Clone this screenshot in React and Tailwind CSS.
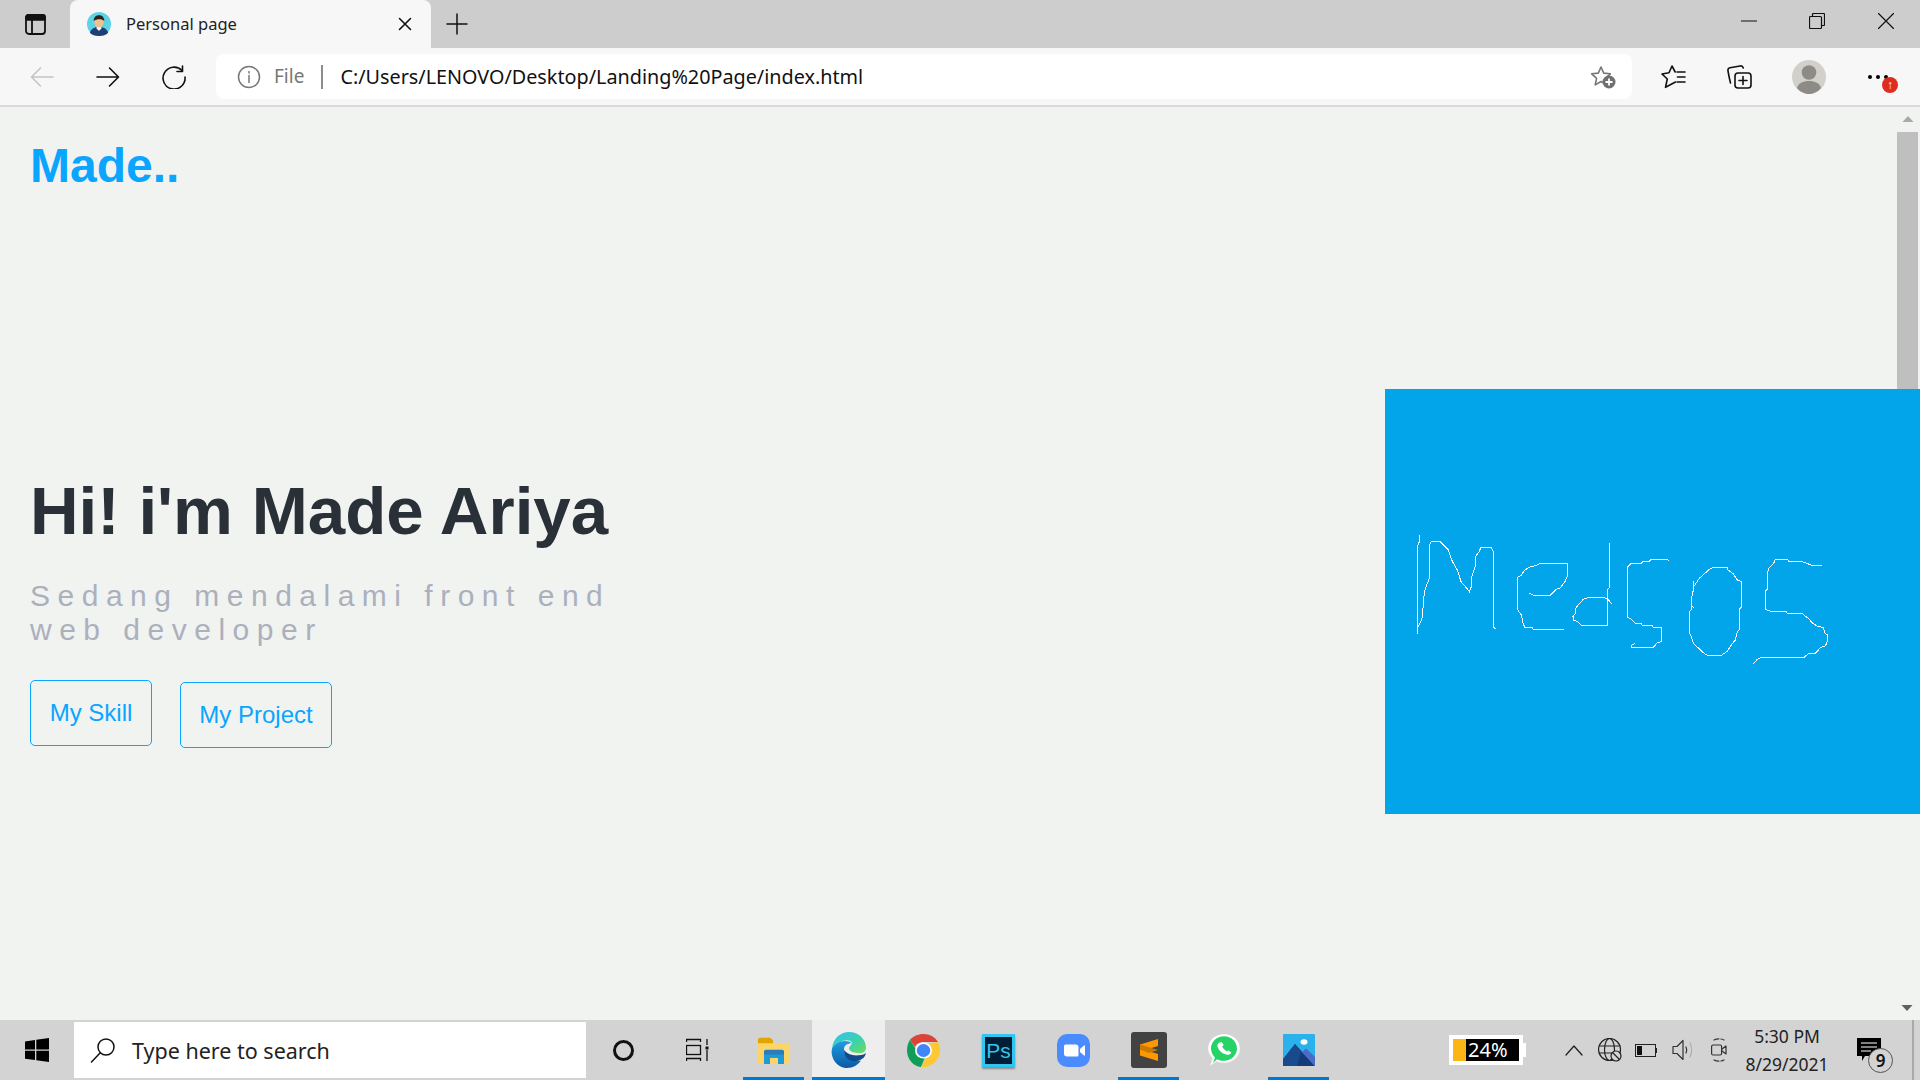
import React from "react";

const ui = { fontFamily: '"Noto Sans", "Open Sans", sans-serif' };
const page = { fontFamily: '"Liberation Sans", Arial, sans-serif' };

// --- browser chrome icons ---
const Line = ({ children, w = 24, h = 24, vb, sw = 1.6, color = "currentColor", className = "" }) => (
  <svg width={w} height={h} viewBox={vb || `0 0 ${w} ${h}`} fill="none" stroke={color} strokeWidth={sw} strokeLinecap="round" strokeLinejoin="round" className={className}>
    {children}
  </svg>
);

const Favicon = () => (
  <svg width="24" height="24" viewBox="0 0 25 29" preserveAspectRatio="none">
    <ellipse cx="12.5" cy="14.5" rx="12.5" ry="14.5" fill="#5dd3e6" />
    <path d="M3 25c1-5 5-7 9.500-7S21 20 22 25c-2 2.500-5.500 4-9.500 4S5 27.500 3 25z" fill="#1f3f77" />
    <path d="M10 17h5v3l-2.500 3-2.500-3z" fill="#f4f4f4" />
    <ellipse cx="12.500" cy="12" rx="5" ry="6.500" fill="#f0c08e" />
    <path d="M7 11c0-5 2.500-7 5.500-7s5.500 2 5.500 7c-2-3-8-3-11 0z" fill="#2b2420" />
  </svg>
);

const StarPath = "M12 3l2.700 6.100 6.600.7-4.900 4.500 1.400 6.600L12 17.500l-5.800 3.400 1.400-6.600-4.900-4.500 6.600-.7z";

const StarAdd = () => (
  <div className="relative w-[27px] h-[25px]">
    <Line color="#777"><path d={StarPath} /></Line>
    <svg width="14" height="14" viewBox="0 0 14 14" className="absolute right-0 bottom-0">
      <circle cx="7" cy="7" r="6.500" fill="#707070" />
      <path d="M7 3.500v7M3.500 7h7" stroke="#fff" strokeWidth="1.800" />
    </svg>
  </div>
);

const Favorites = () => (
  <Line w={25} h={24} color="#111">
    <path d="M14.500 17L4.500 22.300 6.300 14 1 9 8 7.800 11 1 14.200 7" />
    <path d="M16 7h8M16.500 12h7.500M16 17h8" />
  </Line>
);

const Collections = () => (
  <Line w={25} h={24} color="#111">
    <path d="M3.500 18C2.500 14 1.500 9 1 6c-.3-2 .6-3 2-3.300L13 1c1.600-.3 2.800.3 3.300 2" />
    <rect x="8" y="8" width="16" height="15" rx="3" />
    <path d="M16 11.500v8M12 15.500h8" />
  </Line>
);

const Avatar = () => (
  <svg width="34" height="34" viewBox="0 0 34 34">
    <circle cx="17" cy="17" r="17" fill="#d1d0cb" />
    <circle cx="17" cy="12.500" r="7.300" fill="#8e8b87" />
    <path d="M5 28c1.500-5 6-7 12-7s10.500 2 12 7c-3 3.600-7.500 6-12 6S8 31.600 5 28z" fill="#8e8b87" />
  </svg>
);

// --- taskbar icons ---
const WinLogo = () => (
  <svg width="24" height="24" viewBox="0 0 24 24" fill="#000">
    <path d="M0 3.400l10-1.400v9.400H0zM11.300 1.800L24 0v11.400H11.300zM0 12.700h10v9.400L0 20.700zM11.300 12.700H24V24l-12.700-1.800z" />
  </svg>
);

const TaskView = () => (
  <svg width="23" height="24" viewBox="0 0 23 24" fill="none" stroke="#111" strokeWidth="1.300">
    <path d="M.5 4V1.500h14V4M.5 23v-2.500h14V23" />
    <rect x=".5" y="7.500" width="14" height="9" />
    <path d="M21 1v6M21 12v11" />
    <rect x="19.500" y="8.500" width="3" height="3" fill="#111" stroke="none" />
  </svg>
);

const Explorer = () => (
  <svg width="32" height="27" viewBox="0 0 32 34" preserveAspectRatio="none">
    <path d="M0 3a2 2 0 012-2h10l3 3v6H0z" fill="#e2a400" />
    <path d="M0 8h30a2 2 0 012 2v22a2 2 0 01-2 2H2a2 2 0 01-2-2z" fill="#fcd568" />
    <path d="M8 16h16a2 2 0 012 2v16H20v-8h-8v8H6V18a2 2 0 012-2z" fill="#2a7dbd" />
    <path d="M6 22h20v12h-6v-8h-8v8H6z" fill="#1f9ad6" />
  </svg>
);

const Edge = () => (
  <svg width="36" height="36" viewBox="0 0 36 48" preserveAspectRatio="none" className="mr-[2px]">
    <defs>
      <linearGradient id="edgeA" x1="0" y1="0" x2="1" y2="1">
        <stop offset="0" stopColor="#35c1f1" />
        <stop offset=".6" stopColor="#3fd2a8" />
        <stop offset="1" stopColor="#70dc5a" />
      </linearGradient>
      <linearGradient id="edgeB" x1="0" y1="0" x2="0" y2="1">
        <stop offset="0" stopColor="#1b9de2" />
        <stop offset="1" stopColor="#0c59a4" />
      </linearGradient>
    </defs>
    <path d="M2 22C3 9 10 0 19 0c10 0 17 10 17 21 0 4-2 7-6 7-6 0-10-1-11-6 0-3 3-4 3-8-2-4-8-4-12 0-4 3-6 6-8 8z" fill="url(#edgeA)" />
    <path d="M2 22c3-6 8-10 13-10 3 0 5 1 7 3-5 0-8 3-8 8 0 10 7 17 17 15-3 6-8 10-14 10C7 48 0 34 2 22z" fill="url(#edgeB)" />
    <path d="M14 24c3 5 8 8 15 7 3 0 5-1 7-3-1 7-6 11-12 11-6 0-10-7-10-15z" fill="#114a8b" />
  </svg>
);

const Chrome = () => (
  <svg width="33" height="33" viewBox="0 0 33 41" preserveAspectRatio="none">
    <path d="M16.500 0C22.500 0 28 3.500 31 10H16.500C12 10 9 13 8 16L3 7C6 3 11 0 16.500 0z" fill="#db4437" />
    <path d="M3 7l7 14c1 5 4 7 8 8l-4 12C6 40 0 31 0 20.500 0 15 1 11 3 7z" fill="#0f9d58" />
    <path d="M31 10c1.500 3 2 6.500 2 10.500C33 32 25 41 16.500 41h-2.500l6-13c3-3 3.500-9 1-13-.500-1-1.500-2-3-3z" fill="#fcc934" />
    <ellipse cx="16.500" cy="20.500" rx="8.500" ry="10" fill="#fff" />
    <ellipse cx="16.500" cy="20.500" rx="6.800" ry="8" fill="#4285f4" />
  </svg>
);

const Photoshop = () => (
  <div className="w-[33px] h-[33px] border-[3px] border-[#31c5f0] bg-[#001e36] flex items-center justify-center text-[#31c5f0] text-[21px] leading-none shadow-[0_2px_2px_rgba(0,0,0,0.35)]" style={page}>
    Ps
  </div>
);

const Zoom = () => (
  <svg width="33" height="33" viewBox="0 0 33 33">
    <rect width="33" height="33" rx="10" fill="#4a8cff" />
    <path d="M7 12a1.500 1.500 0 011.500-1.500h10A3 3 0 0121.500 13.500V21a1.500 1.500 0 01-1.500 1.500H10A3 3 0 017 19.500z" fill="#fff" />
    <path d="M23 15l4-3.500c.500-.4 1-.2 1 .5v9c0 .700-.500.900-1 .500L23 18z" fill="#fff" />
  </svg>
);

const Sublime = () => (
  <svg width="36" height="36" viewBox="0 0 36 36">
    <rect width="36" height="36" rx="3" fill="#424242" />
    <path d="M27 7v7L9 19.500v-7z" fill="#ff9800" />
    <path d="M9 16.500L27 22v7L9 23.500z" fill="#ff9800" />
    <path d="M9 12.500L27 18l-9 3L9 17.500z" fill="#c97a00" />
  </svg>
);

const WhatsApp = () => (
  <svg width="32" height="32" viewBox="0 0 32 42" preserveAspectRatio="none">
    <path d="M2 42l2.500-10C1.500 28 0 23 0 19 0 8.500 7 0 16 0s16 8.500 16 19-7 19-16 19c-2.500 0-5-.7-7.500-2z" fill="#fff" stroke="#d9d9d9" strokeWidth=".5" />
    <path d="M5 38l2-7C4.500 27.500 3 23 3 19 3 10 9 3 16 3s13 7 13 16-6 16-13 16c-2.500 0-5-.7-7-2z" fill="#25d366" />
    <path d="M11.500 11c-1.500 1-2.500 3-2 5.500 1 5 5 9.500 8.500 10.500 2.500.7 4.500-.5 5.500-2.500l-3-3-1.800 1c-2-1-4-4-4.500-6l1.500-2-2-4z" fill="#fff" />
  </svg>
);

const Photos = () => (
  <svg width="32" height="32" viewBox="0 0 32 42" preserveAspectRatio="none">
    <rect width="32" height="42" rx="1" fill="#2bb1ec" />
    <circle cx="21" cy="10.500" r="3.500" fill="#fff" />
    <path d="M0 33L12 13l20 29H0z" fill="#143a7a" />
    <path d="M19 24l4-5 9 11v12z" fill="#4b6cc5" />
    <path d="M0 42V33l12-20 6 10-4 19z" fill="#1a4a8e" />
  </svg>
);

const Indicator = ({ wide }) => (
  <div className={`absolute bottom-0 h-[3px] bg-[#0078d4] ${wide ? "w-[73px]" : "w-[61px]"}`} />
);

const TaskItem = ({ children, on, active }) => (
  <div className={`relative h-[60px] flex items-center justify-center ${active ? "w-[73px] mx-[1px] bg-[#eeeeee]" : "w-[75px]"}`}>
    {children}
    {on && <Indicator wide={active} />}
  </div>
);

// --- handwriting from the picture, coordinates traced off the reference ---
const strokes = [
  "118,105 118,125 112,140 112,402 112,385 120,370 128,350 130,300 136,265 148,235 148,135 154,124 180,124 205,150 215,180 232,210 243,245 258,262 268,275 274,260 276,228 286,198 286,170 298,155 302,142 334,142 340,155 340,380 347,388",
  "448,280 460,286 510,286 528,268 540,264 555,245 562,228 562,190 482,190 468,196 448,202 432,212 424,226 412,232 412,328 424,345 428,365 434,382 456,382 460,388 552,388",
  "688,128 688,262 682,270 682,376 604,376 592,364 582,362 579,350 586,340 588,325 594,315 610,298 628,292 670,292 684,298 695,311",
  "868,184 862,178 814,178 808,184 790,184 784,190 754,190 742,202 742,352 754,358 766,370 784,370 786,376 816,376 820,382 844,382 844,425 832,428 820,442 754,442 754,436 766,430",
  "940,242 940,270 934,298 934,320 942,322 934,320 934,330 928,335 928,398 934,410 940,430 970,458 982,466 1024,466 1042,454 1050,440 1066,420 1072,395 1078,390 1078,328 1084,322 1084,244 1072,240 1060,222 1042,208 1042,202 1000,202 988,208 958,235 948,250 940,262",
  "1325,196 1296,196 1270,186 1226,184 1222,178 1186,178 1180,192 1168,202 1162,220 1162,268 1156,274 1156,328 1172,334 1218,334 1222,340 1266,340 1288,358 1296,368 1314,380 1330,382 1334,398 1342,405 1342,425 1336,438 1322,442 1306,460 1286,460 1272,472 1144,472 1132,478 1120,491",
];

const Scribble = () => (
  <svg width="535" height="425" viewBox="15 -333 1605 1275" fill="none" stroke="#fff" strokeWidth="3" shapeRendering="crispEdges">
    {strokes.map((s) => (
      <polyline key={s} points={s} />
    ))}
  </svg>
);

export default function App() {
  return (
    <div className="w-[1920px] h-[1080px] overflow-hidden flex flex-col bg-[#f1f3f1]" style={ui}>
      {/* tabs */}
      <header className="h-12 bg-[#cdcdcd] flex shrink-0">
        <div className="w-[70px] flex items-center justify-center">
          <Line w={21} h={21} color="#111" sw={1.8}>
            <rect x="1" y="1" width="19" height="19" rx="3" />
            <path d="M1.500 5.500h18M7 5.500V19.500" />
            <rect x="1" y="1" width="19" height="4.500" rx="2" fill="#111" />
          </Line>
        </div>
        <div className="w-[361px] bg-[#f7f7f7] rounded-t-lg flex items-center pl-[17px]">
          <Favicon />
          <span className="ml-[15px] text-[16.500px] text-[#222]">Personal page</span>
          <span className="ml-auto mr-[19px] flex">
            <Line w={14} h={14} color="#111" sw={1.600}>
              <path d="M1.500 1.500l11 11M12.500 1.500l-11 11" />
            </Line>
          </span>
        </div>
        <div className="ml-[15px] flex items-center">
          <Line w={22} h={22} color="#111" sw={1.500}>
            <path d="M11 1v20M1 11h20" />
          </Line>
        </div>
        <div className="ml-auto flex items-center pb-[6px]">
          <Line w={16} h={16} color="#111" sw={1.200} className="mr-[52px]">
            <path d="M0 8h16" />
          </Line>
          <Line w={16} h={16} color="#111" sw={1.200} className="mr-[53px]">
            <rect x=".5" y="3.500" width="12" height="12" rx="1" />
            <path d="M3.500 3.500V1.500a1 1 0 011-1h10a1 1 0 011 1v10a1 1 0 01-1 1h-2" />
          </Line>
          <Line w={16} h={16} color="#111" sw={1.200} className="mr-[26px]">
            <path d="M.5.500l15 15M15.500.500l-15 15" />
          </Line>
        </div>
      </header>

      {/* toolbar */}
      <nav className="h-[59px] bg-[#f7f7f7] border-b-2 border-[#d9d9d9] flex items-center shrink-0 text-[#111]">
        <Line color="#c4c4c4" className="ml-[30px]"><path d="M23 12H1.500M10.500 3l-9 9 9 9" /></Line>
        <Line color="#111" className="ml-[42px]"><path d="M1 12h21.500M13.500 3l9 9-9 9" /></Line>
        <Line color="#111" className="ml-[42px]">
          <path d="M20 5.500A11 11 0 1023 12" />
          <path d="M20.500 1v5.500H15" />
        </Line>
        <div className="ml-[30px] w-[1416px] h-[45px] bg-white rounded-lg flex items-center">
          <Line color="#777" sw={1.500} className="ml-[21px]">
            <circle cx="12" cy="12" r="10.500" />
            <path d="M12 10.500v7M12 6.500v1.500" />
          </Line>
          <span className="ml-[13px] text-[19px] text-[#777]">File</span>
          <span className="ml-[17px] w-[2px] h-[24px] bg-[#8c8c8c]" />
          <span className="ml-[17px] text-[19.800px] text-[#111]">C:/Users/LENOVO/Desktop/Landing%20Page/index.html</span>
          <span className="ml-auto mr-[16px]"><StarAdd /></span>
        </div>
        <span className="ml-[29px]"><Favorites /></span>
        <span className="ml-[41px]"><Collections /></span>
        <span className="ml-[40px]"><Avatar /></span>
        <div className="relative ml-[42px] w-[20px] flex gap-[4px]">
          <i className="w-[4px] h-[4px] rounded-full bg-black" />
          <i className="w-[4px] h-[4px] rounded-full bg-black" />
          <i className="w-[4px] h-[4px] rounded-full bg-black" />
          <span className="absolute left-[14px] top-[2px] w-4 h-4 rounded-full bg-[#e02b20] text-white text-[12px] font-bold flex items-center justify-center leading-none" style={page}>↑</span>
        </div>
      </nav>

      {/* page */}
      <main className="h-[913px] flex shrink-0" style={page}>
        <section className="flex-1 pl-[30px]">
          <h2 className="pt-[31px] text-[48px] font-bold leading-[55px] text-[#0aa5ff]">Made..</h2>
          <h1 className="mt-[279px] text-[67.300px] font-bold leading-[77px] text-[#2a3038]">Hi! i'm Made Ariya</h1>
          <p className="mt-[30px] w-[620px] text-[30px] leading-[34px] tracking-[7.500px] text-[#abb0bc]">Sedang mendalami front end web developer</p>
          <div className="mt-[33px] flex items-start text-[24px] text-[#0aa5ff]">
            <button className="w-[122px] h-[66px] border border-[#0aa5ff] rounded-[5px]">My Skill</button>
            <button className="ml-[28px] mt-[2px] w-[152px] h-[66px] border border-[#0aa5ff] rounded-[5px]">My Project</button>
          </div>
        </section>
        <aside className="w-[535px] flex flex-col">
          <div className="h-[282px] flex justify-end pr-[2px]">
            <div className="w-[21px] flex flex-col items-center">
              <svg width="12" height="8" viewBox="0 0 12 8" className="mt-[8px]"><path d="M6 1l5.500 6H.5z" fill="#a9a9a9" /></svg>
              <div className="mt-[9px] w-full flex-1 bg-[#bfbfbf]" />
            </div>
          </div>
          <div className="h-[425px] bg-[#02a4ea]"><Scribble /></div>
          <div className="flex-1 flex justify-end items-end pr-[7px] pb-[8px]">
            <svg width="12" height="8" viewBox="0 0 12 8"><path d="M6 7L.5 1h11z" fill="#5f5f5f" /></svg>
          </div>
        </aside>
      </main>

      {/* taskbar */}
      <footer className="h-[60px] bg-[#d3d3d3] flex items-center shrink-0">
        <div className="w-[74px] flex justify-center pr-[1px]"><WinLogo /></div>
        <div className="w-[512px] h-[56px] bg-white flex items-center pl-[16px]">
          <Line w={26} h={26} color="#111" sw={1.500}>
            <circle cx="16" cy="10" r="8" />
            <path d="M10 16L1.500 25" />
          </Line>
          <span className="ml-[16px] pt-[3px] text-[21.500px] text-[#222]">Type here to search</span>
        </div>
        <div className="w-[75px] flex justify-center">
          <div className="w-[21px] h-[21px] rounded-full border-[3px] border-[#111]" />
        </div>
        <div className="w-[75px] flex justify-center pr-[3px]"><TaskView /></div>
        <TaskItem on><Explorer /></TaskItem>
        <TaskItem on active><Edge /></TaskItem>
        <TaskItem><Chrome /></TaskItem>
        <TaskItem><Photoshop /></TaskItem>
        <TaskItem><Zoom /></TaskItem>
        <TaskItem on><Sublime /></TaskItem>
        <TaskItem><WhatsApp /></TaskItem>
        <TaskItem on><Photos /></TaskItem>

        <div className="ml-[113px] w-[74px] h-[30px] border-[4px] border-white bg-black flex items-center relative text-white text-[20px] leading-none">
          <div className="w-[13px] h-full bg-[#fdb515]" />
          <span className="ml-[2px]">24%</span>
          <i className="absolute right-[-7px] top-[4px] w-[3px] h-[14px] bg-white" />
        </div>
        <Line w={18} h={11} color="#222" sw={1.300} className="ml-[42px]"><path d="M1 10l8-9 8 9" /></Line>
        <Line w={24} h={24} color="#222" sw={1.200} className="ml-[15px]">
          <circle cx="11.500" cy="11.500" r="11" />
          <ellipse cx="11.500" cy="11.500" rx="5" ry="11" />
          <path d="M1 8h21M1 15h21" />
          <circle cx="18" cy="18" r="5" fill="#d3d3d3" />
          <path d="M15 15l6 6" />
        </Line>
        <svg width="23" height="13" viewBox="0 0 23 13" className="ml-[13px]" fill="none" stroke="#222">
          <rect x=".5" y=".5" width="20" height="12" />
          <rect x="2" y="2" width="5" height="9" fill="#111" stroke="none" />
          <path d="M21.500 4v5" />
        </svg>
        <Line w={23} h={22} color="#333" sw={1.200} className="ml-[14px]">
          <path d="M1 7.500h4l6-6v19l-6-6H1z" />
          <path d="M14 8c1 2 1 4 0 6" />
          <path d="M18 4c2 4 2 10 0 14" stroke="#aaa" />
        </Line>
        <Line w={16} h={24} color="#333" sw={1.200} className="ml-[16px]">
          <path d="M3 2c3-1.500 7-1.500 10 0M3 22c3 1.500 7 1.500 10 0" strokeDasharray="5 2" />
          <rect x=".6" y="7" width="10" height="10" rx="1.500" />
          <path d="M11 11l4-3v8l-4-3" />
        </Line>
        <div className="ml-[10px] w-[100px] text-center text-[17.500px] leading-[28px] text-[#222]">
          <div>5:30 PM</div>
          <div>8/29/2021</div>
        </div>
        <div className="relative ml-[20px] w-[24px] h-[24px]">
          <svg width="24" height="24" viewBox="0 0 24 24">
            <path d="M0 0h24v18H8l-3 5v-5H0z" fill="#000" />
            <path d="M4 5h16M4 9h16M4 13h10" stroke="#fff" strokeWidth="1.200" />
          </svg>
          <span className="absolute left-[11px] top-[10px] w-[25px] h-[25px] rounded-full border border-[#555] bg-[#d3d3d3] flex items-center justify-center text-[17px] font-semibold text-[#111] leading-none">9</span>
        </div>
        <div className="ml-[31px] w-[2px] h-full bg-[#a9a9a9]" />
      </footer>
    </div>
  );
}
